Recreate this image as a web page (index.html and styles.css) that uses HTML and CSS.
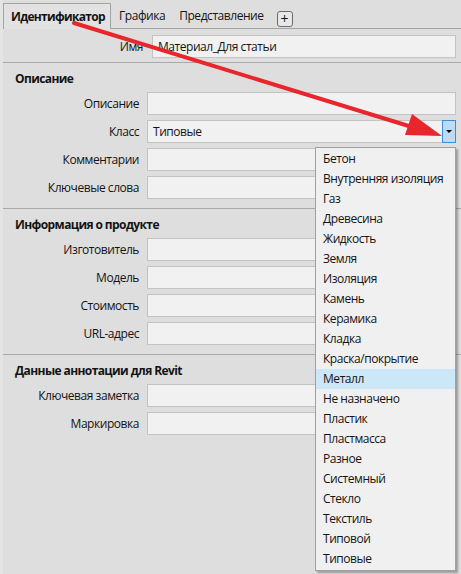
FILE: index.html
```html
<!DOCTYPE html>
<html lang="ru">
<head>
<meta charset="utf-8">
<link rel="stylesheet" href="styles.css">
</head>
<body>
<div class="app">
  <div class="tabs">
    <div class="tab active">Идентификатор</div>
    <div class="tab">Графика</div>
    <div class="tab">Представление</div>
    <div class="tab-add">+</div>
  </div>
  <div class="name-row">
    <span class="label name-label">Имя</span>
    <div class="field name-field">Материал_Для статьи</div>
  </div>

  <section class="group">
    <h2 class="group-title">Описание</h2>
    <div class="form">
      <span class="label">Описание</span><div class="field"></div>
      <span class="label">Класс</span><div class="field combo"><span>Типовые</span><span class="combo-btn"><span class="tri"></span></span></div>
      <span class="label">Комментарии</span><div class="field"></div>
      <span class="label">Ключевые слова</span><div class="field"></div>
    </div>
  </section>

  <section class="group">
    <h2 class="group-title">Информация о продукте</h2>
    <div class="form">
      <span class="label">Изготовитель</span><div class="field"></div>
      <span class="label">Модель</span><div class="field"></div>
      <span class="label">Стоимость</span><div class="field"></div>
      <span class="label">URL-адрес</span><div class="field"></div>
    </div>
  </section>

  <section class="group">
    <h2 class="group-title">Данные аннотации для Revit</h2>
    <div class="form">
      <span class="label">Ключевая заметка</span><div class="field"></div>
      <span class="label">Маркировка</span><div class="field"></div>
    </div>
  </section>

  <ul class="dropdown">
    <li>Бетон</li>
    <li>Внутренняя изоляция</li>
    <li>Газ</li>
    <li>Древесина</li>
    <li>Жидкость</li>
    <li>Земля</li>
    <li>Изоляция</li>
    <li>Камень</li>
    <li>Керамика</li>
    <li>Кладка</li>
    <li>Краска/покрытие</li>
    <li class="selected">Металл</li>
    <li>Не назначено</li>
    <li>Пластик</li>
    <li>Пластмасса</li>
    <li>Разное</li>
    <li>Системный</li>
    <li>Стекло</li>
    <li>Текстиль</li>
    <li>Типовой</li>
    <li>Типовые</li>
  </ul>

  <svg class="arrow" width="461" height="574" viewBox="0 0 461 574">
    <line x1="74" y1="23" x2="412" y2="127" stroke="#e8262b" stroke-width="4" stroke-linecap="round"/>
    <polygon points="442,136 405,135 412,114" fill="#e8262b"/>
  </svg>
</div>
</body>
</html>
```

FILE: styles.css
```css
* { box-sizing: border-box; }
html, body { margin: 0; padding: 0; }
body {
  width: 461px;
  height: 574px;
  background: #e4e4e4;
  font-family: "Open Sans", "Noto Sans", sans-serif;
  font-size: 12px;
  letter-spacing: -0.45px;
  color: #141414;
  overflow: hidden;
}
.app {
  position: relative;
  margin-left: 3px;
  height: 574px;
  background: #dedede;
}
.tabs {
  display: flex;
  align-items: flex-end;
  height: 29px;
  padding-top: 3px;
  border-bottom: 1px solid #a3a3a3;
}
.tab {
  height: 25px;
  line-height: 26px;
  padding: 0 6px 0 8px;
}
.tab.active {
  width: 108px;
  padding-left: 7px;
  border: 1px solid #a3a3a3;
  border-bottom: none;
  margin-bottom: -1px;
  height: 26px;
  background: #e2e2e2;
  font-weight: bold;
  letter-spacing: -0.7px;
}
.tab-add {
  align-self: center;
  margin: 6px 0 0 7px;
  width: 16px;
  height: 16px;
  border: 1px solid #6b6b6b;
  border-radius: 3px;
  line-height: 13px;
  text-align: center;
  font-size: 14px;
  letter-spacing: 0;
  background: #e8e8e8;
}
.name-row {
  display: flex;
  align-items: center;
  padding: 6px 5px 4px 0;
  border-bottom: 1px solid #a9a9a9;
}
.name-label {
  width: 140px;
  margin-right: 9px;
}
.name-field { flex: 1; }
.label {
  text-align: right;
  height: 23px;
  line-height: 22px;
  padding-top: 1px;
  white-space: nowrap;
}
.field {
  height: 23px;
  background: #f1f1f1;
  border: 1px solid #c3c3c3;
  line-height: 22px;
  padding-left: 5px;
}
.group {
  border-bottom: 1px solid #a9a9a9;
  padding: 8px 5px 9px 0;
}
.group:last-of-type { border-bottom: none; }
.group-title {
  margin: 0 0 5px 12px;
  font-size: 12px;
  font-weight: bold;
  line-height: 16px;
  letter-spacing: -0.6px;
}
.form {
  display: grid;
  grid-template-columns: 136px 1fr;
  grid-auto-rows: 23px;
  column-gap: 8px;
  row-gap: 5px;
}
.combo {
  display: flex;
  justify-content: space-between;
  padding-right: 0;
}
.combo-btn {
  width: 14px;
  height: 23px;
  margin: -1px -1px 0 0;
  border: 1px solid #3a8fd9;
  background: #bddbf4;
  display: flex;
  align-items: center;
  justify-content: center;
}
.tri {
  width: 0;
  height: 0;
  border-left: 3px solid transparent;
  border-right: 3px solid transparent;
  border-top: 3px solid #000;
}
.dropdown {
  position: absolute;
  left: 312px;
  top: 147px;
  width: 141px;
  margin: 0;
  padding: 1px 0;
  list-style: none;
  background: #f0f0f0;
  border: 1px solid #a0a0a0;
  box-shadow: 2px 2px 2px rgba(0,0,0,0.3);
}
.dropdown li {
  height: 20px;
  line-height: 20px;
  padding-left: 7px;
  white-space: nowrap;
}
.dropdown li.selected { background: #cce8f8; }
.arrow {
  position: absolute;
  left: -3px;
  top: 0;
  pointer-events: none;
}
```
